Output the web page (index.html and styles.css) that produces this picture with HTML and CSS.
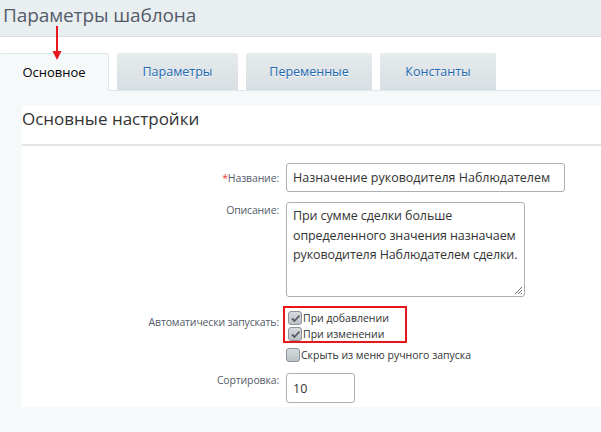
FILE: index.html
```html
<!DOCTYPE html>
<html lang="ru">
<head>
<meta charset="utf-8">
<link rel="stylesheet" href="styles.css">
</head>
<body>
<div class="header"><h1 class="title">Параметры шаблона</h1></div>
<div class="arrow">
  <svg width="10" height="34" viewBox="0 0 10 34"><line x1="5" y1="0" x2="5" y2="27" stroke="#e8171c" stroke-width="2"/><polygon points="0.5,25 9.5,25 5,34" fill="#e8171c"/></svg>
</div>
<div class="tabs">
  <div class="tab active">Основное</div>
  <div class="tab t2">Параметры</div>
  <div class="tab t3">Переменные</div>
  <div class="tab t4">Константы</div>
</div>
<div class="content">
  <div class="panel">
    <h2 class="heading">Основные настройки</h2>
    <div class="form">
      <div class="label l-name"><span class="req">*</span>Название:</div>
      <div class="field"><div class="input name-input">Назначение руководителя Наблюдателем</div></div>

      <div class="label l-desc">Описание:</div>
      <div class="field"><div class="textarea">При сумме сделки больше<br>определенного значения назначаем<br>руководителя Наблюдателем сделки.<svg class="grip" width="10" height="10" viewBox="0 0 10 10"><path d="M9 2 L2 9 M9 5 L5 9 M9 8 L8 9" stroke="#6b7076" stroke-width="1"/></svg></div></div>

      <div class="label l-auto">Автоматически запускать:</div>
      <div class="field">
        <div class="redbox">
          <div class="cb-row"><span class="cb checked"><svg width="11" height="11" viewBox="0 0 11 11"><path d="M2 5.5 L4.5 8 L9.5 2.5" fill="none" stroke="#555b61" stroke-width="1.8"/></svg></span>При добавлении</div>
          <div class="cb-row"><span class="cb checked"><svg width="11" height="11" viewBox="0 0 11 11"><path d="M2 5.5 L4.5 8 L9.5 2.5" fill="none" stroke="#555b61" stroke-width="1.8"/></svg></span>При изменении</div>
        </div>
        <div class="cb-row hide-row"><span class="cb"></span>Скрыть из меню ручного запуска</div>
      </div>

      <div class="label l-sort">Сортировка:</div>
      <div class="field"><div class="input sort-input">10</div></div>
    </div>
  </div>
</div>
</body>
</html>
```

FILE: styles.css
```css
* { box-sizing: border-box; }
html, body { margin: 0; padding: 0; }
body {
  width: 601px;
  height: 432px;
  overflow: hidden;
  background: #fff;
  font-family: "Open Sans", "Noto Sans", sans-serif;
  position: relative;
}
.header {
  height: 37px;
  background: #e9eef0;
  border-bottom: 1px solid #d9dee1;
}
.title {
  margin: 0;
  padding: 0 0 0 3px;
  font-weight: 400;
  font-size: 19px;
  line-height: 30px;
  color: #535c69;
  letter-spacing: -0.1px;
}
.arrow {
  position: absolute;
  left: 52px;
  top: 26px;
  width: 10px;
  height: 34px;
  z-index: 5;
}
.arrow svg { display: block; }
.tabs {
  display: flex;
  height: 53px;
  padding-top: 16px;
  align-items: flex-end;
}
.tab {
  height: 37px;
  display: flex;
  align-items: center;
  justify-content: center;
  font-size: 12.5px;
  color: #2067b0;
  text-shadow: 0 1px 0 #fff;
  background: linear-gradient(#e6ebed, #d8dfe2);
  border-radius: 2px 2px 0 0;
  margin-right: 8px;
  padding-bottom: 1px;
}
.tab.active {
  width: 109px;
  background: #f5f9fa;
  color: #000;
  border: 1px solid #dce6ea;
  border-left: none;
  border-bottom: none;
  font-size: 13px;
  font-weight: 500;
  height: 38px;
  margin-bottom: -1px;
  position: relative;
  z-index: 1;
}
.t2 { width: 121px; }
.t3 { width: 126px; }
.t4 { width: 116px; }
.content {
  background: #f5f9fa;
  border-top: 1px solid #dbe6ec;
  height: 342px;
  padding: 15px 0 0 22px;
}
.panel {
  background: #fff;
  height: 301px;
}
.heading {
  margin: 0;
  font-weight: 400;
  font-size: 17px;
  line-height: 26px;
  color: #333;
  height: 40px;
  border-bottom: 2px solid #e3e5e7;
}
.form {
  display: grid;
  grid-template-columns: 257px 1fr;
  column-gap: 7px;
  padding-top: 17px;
  row-gap: 10px;
}
.label {
  font-size: 10.5px;
  letter-spacing: -0.15px;
  color: #535c69;
  text-align: right;
  line-height: 15px;
}
.req { color: #f04040; }
.l-name { padding-top: 8px; }
.l-desc { padding-top: 1px; }
.l-auto { padding-top: 8px; }
.l-sort { padding-top: 0px; }
.input {
  height: 29px;
  border: 1px solid #a8b0b8;
  border-radius: 3px;
  font-size: 12.5px;
  color: #333;
  padding: 0 6px;
  line-height: 27px;
  background: #fff;
  white-space: nowrap;
}
.name-input { width: 279px; }
.sort-input { width: 69px; height: 30px; line-height: 30px; }
.textarea {
  position: relative;
  width: 239px;
  height: 95px;
  border: 1px solid #a8b0b8;
  border-radius: 3px;
  font-size: 12.5px;
  letter-spacing: -0.1px;
  line-height: 19.5px;
  color: #333;
  padding: 3px 2px 0 6px;
  white-space: nowrap;
}
.grip {
  position: absolute;
  right: 1px;
  bottom: 1px;
}
.redbox {
  width: 124px;
  height: 37px;
  margin-left: -3px;
  margin-top: -1px;
  border: 2px solid #e8161b;
  padding: 2px 0 0 3px;
}
.cb-row {
  display: flex;
  align-items: center;
  font-size: 10.5px;
  color: #333;
  height: 16px;
  white-space: nowrap;
}
.cb {
  width: 14px;
  height: 14px;
  border: 1px solid #8c939a;
  border-radius: 3px;
  background: linear-gradient(#d6dadd, #bcc2c6);
  margin-right: 1px;
  display: flex;
  align-items: center;
  justify-content: center;
}
.hide-row { margin-top: 4px; }
```
